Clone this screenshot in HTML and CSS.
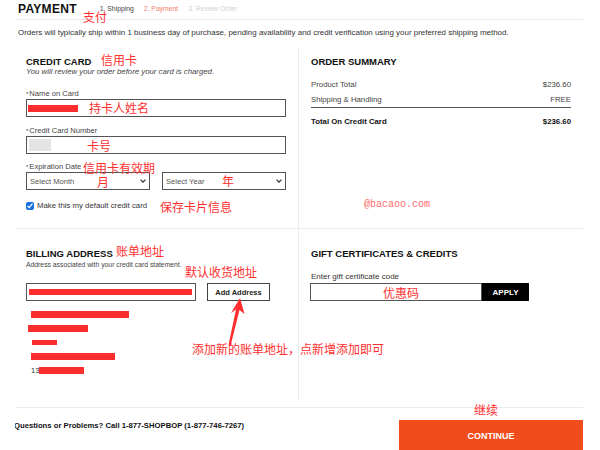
FILE: index.html
```html
<!DOCTYPE html>
<html lang="en">
<head>
    <meta charset="UTF-8">
    <meta name="viewport" content="width=device-width, initial-scale=1.0">
    <title>Shopbop - Payment</title>
    <link rel="stylesheet" href="styles.css">
</head>
<body>
    <div class="page">
        <div class="top">
            <h1>PAYMENT</h1>
            <ul class="steps">
                <li class="done">1. Shipping</li>
                <li class="current">2. Payment</li>
                <li class="todo">3. Review Order</li>
            </ul>
        </div>
        <p class="note">Orders will typically ship within 1 business day of purchase, pending availability and credit verification using your preferred shipping method.</p>

        <div class="grid">
            <!-- credit card -->
            <section class="cell left first">
                <h2>CREDIT CARD</h2>
                <p class="sub">You will review your order before your card is charged.</p>
                <label class="label">Name on Card</label>
                <div class="field"><span class="redact name-bar"></span></div>
                <label class="label">Credit Card Number</label>
                <div class="field"><span class="masked"></span></div>
                <label class="label">Expiration Date</label>
                <div class="pair">
                    <div class="field select">Select Month
                        <svg width="6" height="4" viewBox="0 0 6 4"><path d="M0.6 0.6L3 3.2L5.4 0.6" fill="none" stroke="#333" stroke-width="1.2"/></svg>
                    </div>
                    <div class="field select">Select Year
                        <svg width="6" height="4" viewBox="0 0 6 4"><path d="M0.6 0.6L3 3.2L5.4 0.6" fill="none" stroke="#333" stroke-width="1.2"/></svg>
                    </div>
                </div>
                <label class="check"><input type="checkbox" checked> Make this my default credit card</label>
            </section>

            <!-- order summary -->
            <section class="cell right first">
                <h2>ORDER SUMMARY</h2>
                <div class="rows">
                    <div class="row"><span>Product Total</span><span>$236.60</span></div>
                    <div class="row"><span>Shipping &amp; Handling</span><span>FREE</span></div>
                </div>
                <div class="row total"><span>Total On Credit Card</span><span>$236.60</span></div>
            </section>

            <!-- billing address -->
            <section class="cell left">
                <h2>BILLING ADDRESS</h2>
                <p class="small">Address associated with your credit card statement.</p>
                <div class="addr-line">
                    <div class="field address"><span class="redact addr-bar"></span></div>
                    <button class="add-btn">Add Address</button>
                </div>
                <div class="address-list">
                    <div class="addr"><span class="redact" style="width: 98px; margin-left: 5px;"></span></div>
                    <div class="addr"><span class="redact" style="width: 60px; margin-left: 2px;"></span></div>
                    <div class="addr"><span class="redact thin" style="width: 25px; margin-left: 6px;"></span></div>
                    <div class="addr"><span class="redact" style="width: 84px; margin-left: 5px;"></span></div>
                    <div class="addr"><span class="phone">13</span><span class="redact" style="width: 45px;"></span></div>
                </div>
            </section>

            <!-- gift -->
            <section class="cell right">
                <h2>GIFT CERTIFICATES &amp; CREDITS</h2>
                <label class="gift-label">Enter gift certificate code</label>
                <div class="gift">
                    <div class="gift-input"></div>
                    <button class="apply">APPLY</button>
                </div>
            </section>
        </div>

        <div class="foot">
            <p class="help">Questions or Problems? Call 1-877-SHOPBOP (1-877-746-7267)</p>
            <button class="continue">CONTINUE</button>
        </div>

        <!-- red notes drawn over the screenshot -->
        <span class="mark" style="left: 83px; top: 11px;">支付</span>
        <span class="mark" style="left: 101px; top: 54px;">信用卡</span>
        <span class="mark" style="left: 89px; top: 102px;">持卡人姓名</span>
        <span class="mark" style="left: 87px; top: 140px;">卡号</span>
        <span class="mark" style="left: 83px; top: 162px;">信用卡有效期</span>
        <span class="mark" style="left: 97px; top: 176px;">月</span>
        <span class="mark" style="left: 222px; top: 175px;">年</span>
        <span class="mark" style="left: 160px; top: 201px;">保存卡片信息</span>
        <span class="mark" style="left: 116px; top: 245px;">账单地址</span>
        <span class="mark" style="left: 185px; top: 266px;">默认收货地址</span>
        <span class="mark" style="left: 192px; top: 343px;">添加新的账单地址，点新增添加即可</span>
        <span class="mark" style="left: 383px; top: 287px;">优惠码</span>
        <span class="mark" style="left: 474px; top: 404px;">继续</span>
        <span class="watermark">@bacaoo.com</span>
        <svg class="arrow" width="22" height="54" viewBox="0 0 22 54">
            <polygon points="14,3 18.5,19 13.5,15 4.5,51 2.5,50 10,14.5 5,18" fill="#ff2d2d"/>
        </svg>
    </div>
</body>
</html>
```

FILE: styles.css
```css
body {
    margin: 0;
    font-family: "Liberation Sans", Arial, sans-serif;
    color: #333;
    background: #fff;
}
.page {
    position: relative;
    width: 568px;
    height: 450px;
    margin: 0 15px;
    overflow: hidden;
}

/* header */
.top {
    display: flex;
    align-items: center;
    padding: 1.5px 3px 3.5px;
    border-bottom: 1px solid #ececec;
}
h1 {
    margin: 0;
    font-size: 12px;
    line-height: 14px;
    letter-spacing: 0.3px;
    color: #111;
}
.steps {
    display: flex;
    gap: 10px;
    list-style: none;
    margin: 0 0 0 23px;
    padding: 0;
    font-size: 6.8px;
}
.steps .done { color: #444; }
.steps .current { color: #f4806f; }
.steps .todo { color: #d0d0d0; }

.note {
    margin: 8px 0 9px 3px;
    font-size: 7.95px;
    line-height: 10px;
    color: #333;
}

/* grid */
.grid {
    display: grid;
    grid-template-columns: 283px 1fr;
}
.cell {
    padding: 18.5px 12px 0 11px;
}
.cell.first {
    padding-top: 9px;
    border-bottom: 1px solid #ececec;
}
.cell.right {
    border-left: 1px solid #ececec;
    padding-left: 12px;
}
h2 {
    margin: 0;
    font-size: 9.5px;
    line-height: 11px;
    color: #111;
}
.sub {
    margin: 0 0 12px;
    font-size: 7.8px;
    line-height: 10px;
    font-style: italic;
    color: #444;
}
.label {
    display: block;
    font-size: 7.6px;
    line-height: 10px;
    color: #444;
}
.label::before {
    content: "*";
    font-size: 6px;
    vertical-align: top;
    margin-right: 1px;
}
.field {
    display: flex;
    align-items: center;
    box-sizing: border-box;
    height: 18px;
    margin-bottom: 8.5px;
    padding: 0 2px;
    border: 1px solid #555;
    background: #fff;
}
.redact {
    display: inline-block;
    height: 7px;
    background: #fb2e2e;
}
.redact.thin { height: 5px; }
.name-bar { width: 50px; margin-left: -1px; }
.masked {
    width: 22px;
    height: 12px;
    background: #e4e4e4;
}
.pair {
    display: flex;
    gap: 12px;
}
.select {
    flex: 1;
    justify-content: space-between;
    padding: 0 3px;
    font-size: 7.6px;
    color: #555;
    margin-bottom: 0;
}
.check {
    display: flex;
    align-items: center;
    gap: 3px;
    margin-top: 10.5px;
    padding-bottom: 17.5px;
    font-size: 7.8px;
    line-height: 10px;
    color: #333;
}
.check input {
    width: 8px;
    height: 8px;
    margin: 0;
    accent-color: #1a6fe0;
}

/* order summary */
.rows {
    margin-top: 9.5px;
    border-bottom: 1px solid #555;
}
.row {
    display: flex;
    justify-content: space-between;
    font-size: 7.8px;
    line-height: 15px;
    color: #444;
}
.row.total {
    margin-top: 9px;
    line-height: 10px;
    font-weight: bold;
    color: #111;
}

/* billing */
.small {
    margin: 2.5px 0 14px;
    font-size: 6.8px;
    line-height: 8px;
    color: #444;
}
.addr-line {
    display: flex;
    gap: 11px;
}
.address {
    width: 170px;
    margin-bottom: 0;
}
.addr-bar { width: 163px; height: 6px; }
.add-btn {
    height: 18px;
    width: 63px;
    padding: 0;
    border: 1px solid #444;
    background: #fff;
    font-family: inherit;
    font-size: 7.5px;
    font-weight: bold;
    color: #222;
}
.address-list {
    margin-top: 6.5px;
    padding-bottom: 22.5px;
}
.addr {
    display: flex;
    align-items: center;
    height: 14px;
}
.phone {
    margin-left: 5px;
    font-size: 7.5px;
    color: #333;
}

/* gift */
.gift-label {
    display: block;
    margin-top: 13px;
    font-size: 8px;
    line-height: 10px;
    color: #333;
}
.gift {
    display: flex;
    margin: 1.5px 0 0 -1px;
    height: 18px;
}
.gift-input {
    box-sizing: border-box;
    width: 172px;
    border: 1px solid #555;
}
.apply {
    width: 47px;
    padding: 0;
    border: none;
    background: #000;
    color: #fff;
    font-family: inherit;
    font-size: 8px;
    font-weight: bold;
}

/* footer */
.foot {
    display: flex;
    justify-content: space-between;
    align-items: flex-start;
    margin-top: 7px;
    border-top: 1px solid #ececec;
}
.help {
    margin: 13px 0 0 -1px;
    font-size: 7.7px;
    line-height: 10px;
    font-weight: bold;
    color: #111;
}
.continue {
    width: 184px;
    height: 32px;
    margin-top: 12px;
    border: none;
    background: #f04c1c;
    color: #fff;
    font-family: inherit;
    font-size: 9px;
    font-weight: bold;
}

/* annotations */
.mark {
    position: absolute;
    font-family: "Noto Sans CJK SC", sans-serif;
    font-size: 12px;
    line-height: 12px;
    color: #ff3030;
    white-space: nowrap;
    margin-left: -15px;
}
.watermark {
    position: absolute;
    left: 349px;
    top: 200px;
    font-family: "Liberation Mono", monospace;
    font-size: 10px;
    line-height: 10px;
    color: #ff6b6b;
}
.arrow {
    position: absolute;
    left: 211px;
    top: 295px;
}
```
